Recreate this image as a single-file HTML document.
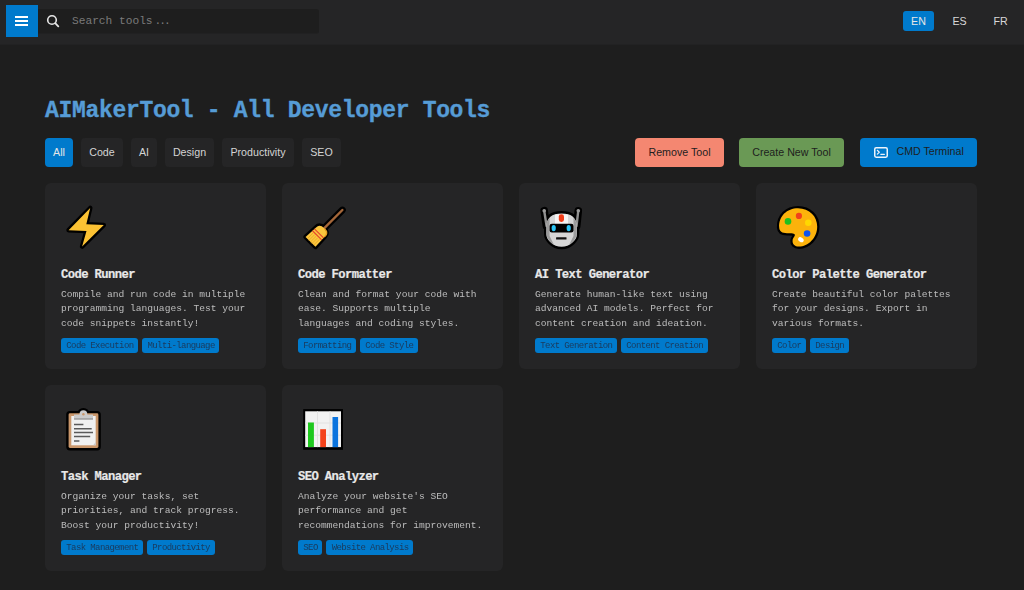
<!DOCTYPE html>
<html lang="en">
<head>
<meta charset="utf-8">
<title>AIMakerTool - All Developer Tools</title>
<style>
*{box-sizing:border-box;margin:0;padding:0}
html,body{width:1024px;height:590px;overflow:hidden;background:#1e1e1e;color:#d4d4d4;font-family:"Liberation Mono",monospace;}
#page{position:absolute;left:0;top:0;width:1024px;height:590px;}
#hdr{position:absolute;left:0;top:0;width:1024px;height:44px;background:#252526;box-shadow:0 1px 0 #222223}
#menu{position:absolute;left:6px;top:5px;width:32px;height:32px;background:#007acc}
#menu i{position:absolute;left:9px;width:13px;height:2px;background:#fff}
#search{position:absolute;left:38px;top:9px;width:281px;height:24px;box-shadow:0 1px 0 #212122;background:#1e1e1e;border-radius:0 3px 3px 0}
#search>span{position:absolute;left:34px;top:6.3px;font-size:11.2px;line-height:13px;color:#7a7a7a;white-space:pre}
.lang{position:absolute;top:11px;height:20px;font:10.67px/20px "Liberation Sans",sans-serif;text-align:center;color:#d8d8d8;border-radius:3px}
h1{position:absolute;left:45px;top:98px;font-size:23px;letter-spacing:-0.315px;line-height:27px;font-weight:bold;color:#569cd6;-webkit-text-stroke:0.35px #569cd6;white-space:pre}
.fb{position:absolute;top:138px;height:29px;border-radius:4px;background:#252526;color:#d4d4d4;font:10.67px/29px "Liberation Sans",sans-serif;text-align:center;white-space:pre}
.fb.on{background:#007acc;color:#e6e6e6}
.card{position:absolute;width:221px;height:186px;background:#252526;border-radius:6px}
.card h3{position:absolute;left:16px;top:85px;font-size:12.2px;letter-spacing:-0.6px;line-height:14px;font-weight:bold;color:#e8e8e8;-webkit-text-stroke:0.2px #e8e8e8;white-space:pre}
.card p{position:absolute;left:16px;top:105px;font-size:9.6px;line-height:14.4px;color:#d4d4d4;opacity:.86;will-change:transform;white-space:pre}
.card .tags{position:absolute;left:16px;top:154.6px;will-change:transform;white-space:nowrap;font-size:0}
.card .tags b{display:inline-block;height:15.4px;padding:0 4.7px 0 5.3px;letter-spacing:-0.6px;margin-right:4px;background:#007acc;border-radius:3px;font-size:9px;line-height:17.6px;font-weight:normal;color:#1a3a5c}
.card svg{position:absolute;left:10px;top:12px;width:64px;height:64px;overflow:visible}
</style>
</head>
<body>
<div id="page">
<div id="hdr">
  <div id="menu"><i style="top:11px"></i><i style="top:15px"></i><i style="top:19px"></i></div>
  <div id="search">
    <svg width="14" height="14" viewBox="0 0 14 14" style="position:absolute;left:8px;top:4.5px"><circle cx="6" cy="6" r="4.3" fill="none" stroke="#e6e6e6" stroke-width="1.6"/><path d="M9.2 9.2 L12.3 12.3" stroke="#e6e6e6" stroke-width="1.8" stroke-linecap="round"/></svg>
    <span>Search tools<span style="position:static;letter-spacing:-2px;margin-left:2px">...</span></span>
  </div>
  <div class="lang" style="left:903px;width:31px;background:#007acc;color:#e6e6e6">EN</div>
  <div class="lang" style="left:944px;width:31px">ES</div>
  <div class="lang" style="left:985px;width:31px">FR</div>
</div>
<h1>AIMakerTool - All Developer Tools</h1>
<div class="fb on" style="left:45px;width:28px">All</div>
<div class="fb" style="left:81px;width:42px">Code</div>
<div class="fb" style="left:131px;width:26px">AI</div>
<div class="fb" style="left:165px;width:49px">Design</div>
<div class="fb" style="left:222px;width:72px">Productivity</div>
<div class="fb" style="left:302px;width:39px">SEO</div>
<div class="fb" style="left:635px;width:89px;background:#f48771;color:#1e1e1e">Remove Tool</div>
<div class="fb" style="left:739px;width:105px;background:#6a9955;color:#1e1e1e">Create New Tool</div>
<div class="fb" style="left:860px;width:117px;background:#007acc;color:#1e1e1e;text-align:left;padding-left:36.5px;line-height:27px"><svg width="14" height="11" viewBox="0 0 14 11" style="position:absolute;left:14px;top:9px"><rect x="0.75" y="0.75" width="12.5" height="9.5" rx="1.4" fill="none" stroke="#eef4fb" stroke-width="1.5"/><path d="M3.3 3.3 L5.3 5.2 L3.3 7.1" fill="none" stroke="#eef4fb" stroke-width="1.2" stroke-linecap="round" stroke-linejoin="round"/><path d="M6.8 7.3 H10.4" stroke="#eef4fb" stroke-width="1.2" stroke-linecap="round"/></svg>CMD Terminal</div>

<div class="card" style="left:45px;top:183px">
  <svg viewBox="0 0 64 64"><path d="M35.2 13 L31.3 29.2 L48.8 30 L27.1 51.5 L31.5 35.9 L13.6 35.2 Z" fill="#fcc233" stroke="#000" stroke-width="4.6" stroke-linejoin="round" paint-order="stroke"/></svg>
  <h3>Code Runner</h3>
  <p>Compile and run code in multiple
programming languages. Test your
code snippets instantly!</p>
  <div class="tags"><b>Code Execution</b><b>Multi-language</b></div>
</div>
<div class="card" style="left:282px;top:183px">
  <svg viewBox="0 0 64 64"><g transform="translate(50.4 15) rotate(45)">
<path d="M0 0 V27" stroke="#000" stroke-width="6.8" stroke-linecap="round" fill="none"/>
<path d="M-7 45.1 L-6.3 31 Q-6.3 25.8 0 25.8 Q6.3 25.8 6.3 31 L7 45.1 Z" fill="#000" stroke="#000" stroke-width="4.6" stroke-linejoin="round"/>
<path d="M0 0 V27" stroke="#a5673a" stroke-width="2.4" stroke-linecap="round" fill="none"/>
<path d="M-7 45.1 L-6.3 31 Q-6.3 25.8 0 25.8 Q6.3 25.8 6.3 31 L7 45.1 Z" fill="#fbc63e"/>
<path d="M-4.5 37 V45.1 M-2.2 37 V45.1 M0 37 V45.1 M2.2 37 V45.1 M4.5 37 V45.1" stroke="#e9a825" stroke-width="0.8"/>
<path d="M6.3 32 V31 Q6.3 25.8 0.5 25.8" fill="none" stroke="#e9a020" stroke-width="1.3"/>
<path d="M-6.4 33.1 H6.4 M-6.5 35.8 H6.5" stroke="#e5492c" stroke-width="1.2"/>
</g></svg>
  <h3>Code Formatter</h3>
  <p>Clean and format your code with
ease. Supports multiple
languages and coding styles.</p>
  <div class="tags"><b>Formatting</b><b>Code Style</b></div>
</div>
<div class="card" style="left:519px;top:183px">
  <svg viewBox="0 0 64 64">
<g stroke="#000" stroke-width="4.8" stroke-linejoin="round" stroke-linecap="round" fill="#000">
<path d="M15.2 15.7 L17.4 31 M49.3 15.7 L47.7 31"  stroke-width="7.6"/>
<path d="M17.4 32.5 C17.4 22.5 23 18.5 32.6 18.5 C42.5 18.5 47.9 22.5 47.9 32.5 V39 C47.9 43 46 45 44 47 C40.5 50.5 36.5 51.8 32.6 51.8 C28.5 51.8 24.7 50.5 21.3 47 C19.3 45 17.4 43 17.4 39 Z"/>
</g>
<path d="M15.2 15.7 L17.6 31 M49.3 15.7 L47.5 31" stroke="#8f8f8f" stroke-width="2.4" stroke-linecap="round"/>
<circle cx="15.2" cy="15.7" r="1.8" fill="#9a9a9a"/><circle cx="49.3" cy="15.7" r="1.8" fill="#9a9a9a"/>
<path d="M17.4 32.5 C17.4 22.5 23 18.5 32.6 18.5 C42.5 18.5 47.9 22.5 47.9 32.5 V39 C47.9 43 46 45 44 47 C40.5 50.5 36.5 51.8 32.6 51.8 C28.5 51.8 24.7 50.5 21.3 47 C19.3 45 17.4 43 17.4 39 Z" fill="#d6d6d6"/>
<path d="M17.4 32 Q17.4 26 20.6 23 V41 L25 50 Q19 46 17.4 40 Z" fill="#9c9c9c"/>
<path d="M47.7 32 Q47.7 26 44.5 23 V41 L40 50 Q46 46 47.7 40 Z" fill="#9c9c9c"/>
<path d="M26 19.7 Q32.5 18.4 39 19.7 V29 H26 Z" fill="#f4f4f4"/>
<rect x="29.8" y="19.2" width="5.2" height="7.8" rx="2.4" fill="#f03c18"/>
<rect x="20.6" y="28.7" width="23.9" height="8.8" rx="2.2" fill="#000"/>
<ellipse cx="24.7" cy="33.1" rx="2.1" ry="3.2" fill="#2bc4f5"/><ellipse cx="39.7" cy="33.1" rx="2.1" ry="3.2" fill="#2bc4f5"/>
<rect x="27.1" y="42.2" width="10.4" height="2.4" rx="0.4" fill="#111"/>
</svg>
  <h3>AI Text Generator</h3>
  <p>Generate human-like text using
advanced AI models. Perfect for
content creation and ideation.</p>
  <div class="tags"><b>Text Generation</b><b>Content Creation</b></div>
</div>
<div class="card" style="left:756px;top:183px">
  <svg viewBox="0 0 64 64">
<path id="pal" d="M13.2 32.5 C12.5 21 21 13.2 32 13.2 C43.5 13.2 51.2 21.5 51.2 31.5 C51.2 43 42 51.6 33 51.6 C28.5 51.6 26.3 49 26.6 45.5 C26.9 42.5 29.3 41.5 28.8 39.6 C28.3 38 25 38.2 21 38.2 C16 38.2 13.5 36.5 13.2 32.5 Z" fill="#fcb20b" stroke="#000" stroke-width="4.6" stroke-linejoin="round" paint-order="stroke"/>
<circle cx="32.9" cy="20.9" r="3.1" fill="#f0401c"/>
<circle cx="22" cy="26.4" r="3.3" fill="#1fc01f"/>
<circle cx="42.3" cy="27.7" r="3.3" fill="#ffd800"/>
<circle cx="41.1" cy="38.5" r="3.3" fill="#0d54f0"/>
<ellipse cx="34.9" cy="44.7" rx="3" ry="2.2" transform="rotate(35 34.9 44.7)" fill="#fff"/>
</svg>
  <h3>Color Palette Generator</h3>
  <p>Create beautiful color palettes
for your designs. Export in
various formats.</p>
  <div class="tags"><b>Color</b><b>Design</b></div>
</div>
<div class="card" style="left:45px;top:385px">
  <svg viewBox="0 0 64 64">
<g fill="#000" stroke="#000" stroke-width="4.8" stroke-linejoin="round"><rect x="13.6" y="16.3" width="29.8" height="34.7" rx="1.2"/><circle cx="28.4" cy="17.2" r="3.9"/></g>
<rect x="13.6" y="16.3" width="29.8" height="34.7" rx="1.4" fill="#c9966a"/>
<rect x="16.3" y="19" width="24.4" height="29.3" fill="#f0f0f0"/>
<path d="M38.2 48.3 L40.7 45.1 V48.3 Z" fill="#c9c9c9"/>
<circle cx="28.4" cy="17.2" r="3.9" fill="#cbcbcb"/>
<rect x="19" y="17.6" width="19" height="4" fill="#cbcbcb"/>
<rect x="19" y="21.2" width="19" height="1.5" fill="#9b9b9b"/>
<circle cx="28.4" cy="17.3" r="1.2" fill="#c9966a"/>
<path d="M19 27.4 H28.4 M19 31.7 H36.7 M19 35.6 H38 M19 39.6 H35.2 M19 43.9 H24.4" stroke="#5a5a5a" stroke-width="1.5"/>
</svg>
  <h3>Task Manager</h3>
  <p>Organize your tasks, set
priorities, and track progress.
Boost your productivity!</p>
  <div class="tags"><b>Task Management</b><b>Productivity</b></div>
</div>
<div class="card" style="left:282px;top:385px">
  <svg viewBox="0 0 64 64">
<rect x="11.2" y="12.1" width="39.8" height="40.7" fill="#000"/>
<rect x="13.2" y="14.3" width="35.8" height="35.8" fill="#f2f2f2"/>
<path d="M25.5 14.3 V50.1 M38 14.3 V50.1 M13.2 26 H49 M13.2 38.2 H49" stroke="#e2e2e2" stroke-width="1"/>
<rect x="16" y="25.5" width="5.9" height="24.6" fill="#1ec81e"/>
<rect x="28.2" y="32.2" width="5.8" height="17.9" fill="#f4431c"/>
<rect x="40.5" y="20" width="5.6" height="30.1" fill="#0b74de"/>
</svg>
  <h3>SEO Analyzer</h3>
  <p>Analyze your website's SEO
performance and get
recommendations for improvement.</p>
  <div class="tags"><b>SEO</b><b>Website Analysis</b></div>
</div>
</div>
</body>
</html>
